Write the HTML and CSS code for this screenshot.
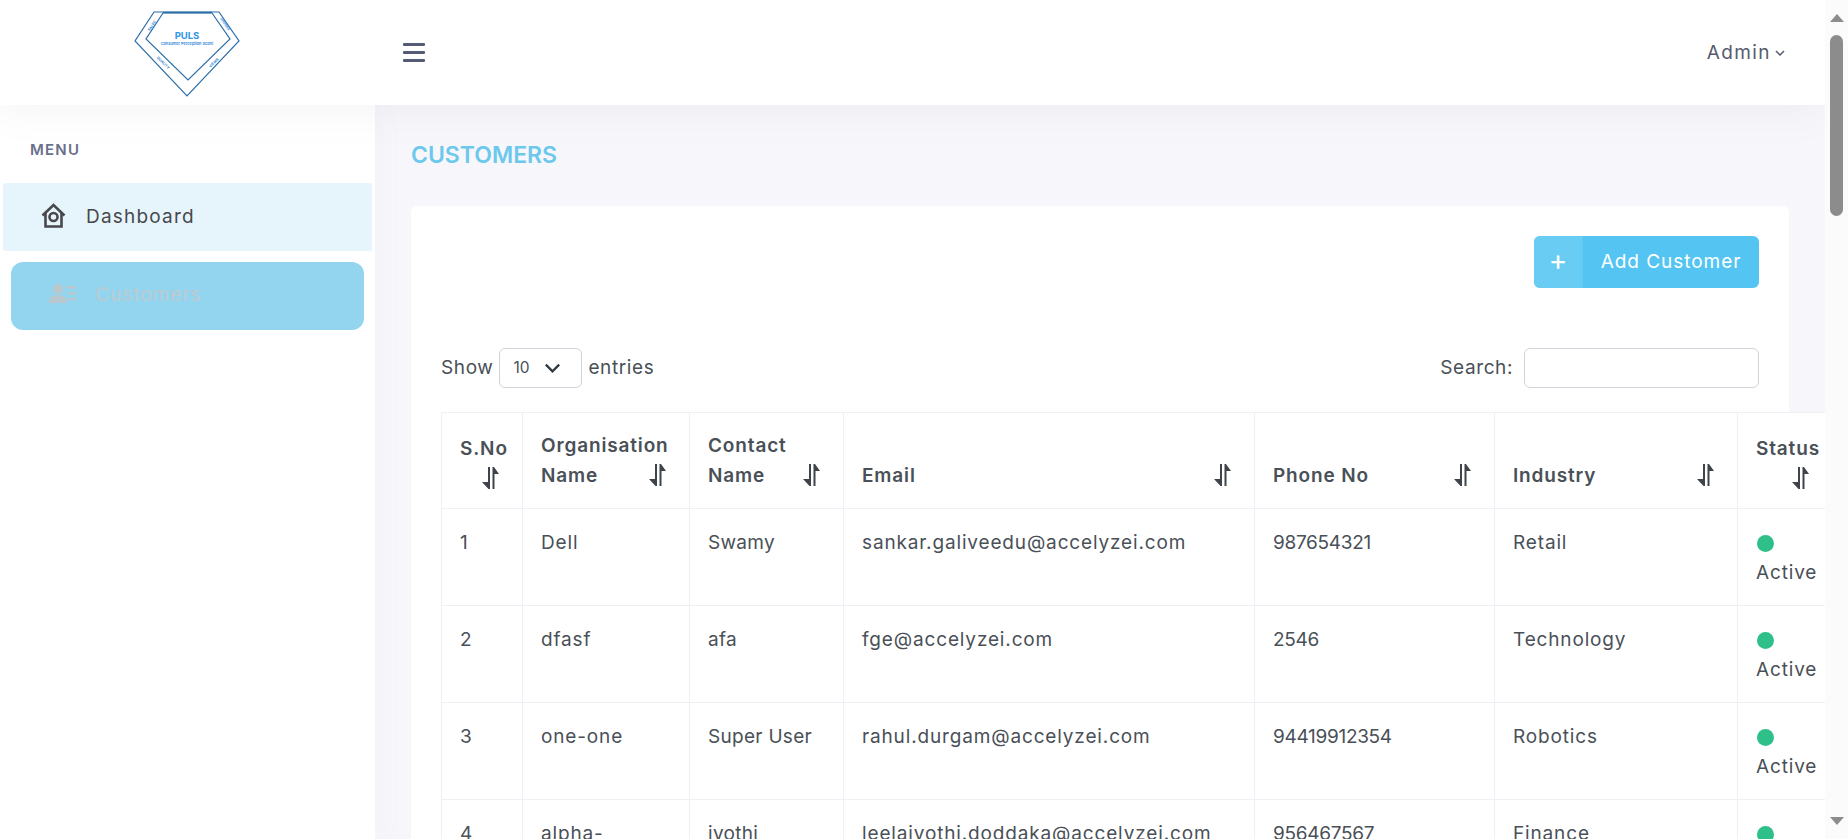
FILE: index.html
```html
<!DOCTYPE html>
<html lang="en">
<head>
<meta charset="utf-8">
<title>Customers</title>
<link rel="stylesheet" href="styles.css">
</head>
<body>
<svg class="defs" aria-hidden="true"><symbol id="sort" viewBox="0 0 17 22"><path d="M6 0h2v22H6.500L0 15h6zM10.500 0H12l5 7h-4.500v15h-2z"/></symbol></svg>
<div class="app">
  <div class="page">
    <header class="topbar">
      <div class="brand">
        <svg class="logo" viewBox="0 0 114 100">
          <g fill="none" stroke="#2c6ea8" stroke-width="1.2">
            <path d="M24 9H89L109 38 57 93 5 38Z"/>
            <path d="M33 10H82L100 36 58 77 16 36Z"/>
          </g>
          <path d="M33 9.500H82" stroke="#2c6ea8" stroke-width="1.500"/>
          <text x="57" y="36" class="logo-title">PULS</text>
          <text x="57" y="41.500" class="logo-sub">Consumer Perception Score</text>
          <text class="logo-side" transform="translate(22 23) rotate(-56)">SALES</text>
          <text class="logo-side" transform="translate(95 21) rotate(56)">ORDERS</text>
          <text class="logo-side" transform="translate(33 60) rotate(45)">QUALITY</text>
          <text class="logo-side" transform="translate(84 60) rotate(-45)">VIEWS</text>
        </svg>
      </div>
      <button class="burger" aria-label="Menu"><span></span><span></span><span></span></button>
      <div class="user">Admin
        <svg class="user-chevron" viewBox="0 0 10 6"><path d="M1 1l4 4 4-4" fill="none" stroke="#555b6e" stroke-width="1.500"/></svg>
      </div>
    </header>
    <div class="body">
      <aside class="sidebar">
        <div class="menu-label">MENU</div>
        <a class="nav nav-dash">
          <svg class="nav-home" viewBox="0 0 26 26"><g fill="none" stroke="#48484d" stroke-width="2.600"><path d="M1.500 12.500 12.500 2l11 10.500"/><path d="M4.500 10v13.500h16V10"/><circle cx="12.500" cy="14" r="4"/></g></svg>
          <span class="nav-text">Dashboard</span>
        </a>
        <a class="nav nav-cust">
          <svg class="nav-users" viewBox="0 0 27 19"><g fill="#b9c7cf"><circle cx="9" cy="5" r="5"/><path d="M0 19c0-6 4-8 9-8s9 2 9 8zM17 2h10v2.500H17zM19 8h8v2.500h-8zM19 14h8v2.500h-8z"/></g></svg>
          <span class="nav-text">Customers</span>
        </a>
      </aside>
      <main class="main">
        <h1 class="title">CUSTOMERS</h1>
        <section class="card">
          <div class="actions">
            <button class="add"><span class="add-plus">+</span><span class="add-text">Add Customer</span></button>
          </div>
          <div class="controls">
            <div class="length">Show
              <span class="select">10<svg class="select-chevron" viewBox="0 0 20 12"><path d="M2 2l8 8 8-8" fill="none" stroke="#343a40" stroke-width="2.800"/></svg></span>
              entries</div>
            <div class="search">Search: <span class="search-box"></span></div>
          </div>
          <table class="grid">
            <colgroup><col class="c1"><col class="c2"><col class="c3"><col class="c4"><col class="c5"><col class="c6"><col class="c7"></colgroup>
            <thead>
              <tr>
                <th><div class="th th-stack">S.No<svg class="sort"><use href="#sort"/></svg></div></th>
                <th><div class="th"><span>Organisation<br>Name</span><svg class="sort"><use href="#sort"/></svg></div></th>
                <th><div class="th"><span>Contact<br>Name</span><svg class="sort"><use href="#sort"/></svg></div></th>
                <th><div class="th"><span>Email</span><svg class="sort"><use href="#sort"/></svg></div></th>
                <th><div class="th"><span>Phone No</span><svg class="sort"><use href="#sort"/></svg></div></th>
                <th><div class="th"><span>Industry</span><svg class="sort"><use href="#sort"/></svg></div></th>
                <th><div class="th th-stack">Status<svg class="sort"><use href="#sort"/></svg></div></th>
              </tr>
            </thead>
            <tbody>
              <tr><td>1</td><td>Dell</td><td>Swamy</td><td>sankar.galiveedu@accelyzei.com</td><td>987654321</td><td>Retail</td><td><i class="dot"></i><br>Active</td></tr>
              <tr><td>2</td><td>dfasf</td><td>afa</td><td>fge@accelyzei.com</td><td>2546</td><td>Technology</td><td><i class="dot"></i><br>Active</td></tr>
              <tr><td>3</td><td>one-one</td><td>Super User</td><td>rahul.durgam@accelyzei.com</td><td>94419912354</td><td>Robotics</td><td><i class="dot"></i><br>Active</td></tr>
              <tr><td>4</td><td>alpha-</td><td>jyothi</td><td>leelajyothi.doddaka@accelyzei.com</td><td>956467567</td><td>Finance</td><td><i class="dot"></i><br>Active</td></tr>
            </tbody>
          </table>
        </section>
      </main>
    </div>
  </div>
  <div class="scrollbar">
    <i class="arrow arrow-up"></i>
    <i class="thumb"></i>
    <i class="arrow arrow-down"></i>
  </div>
</div>
</body>
</html>
```
FILE: styles.css
```css
* { box-sizing: border-box; }
html, body { margin: 0; height: 100%; overflow: hidden; }
body { font-family: Inter, "Noto Sans", sans-serif; font-size: 19px; letter-spacing: .85px; color: #495057; background: #fff; }
.defs { display: none; }
.app { display: flex; height: 839px; }
.page { flex: 1; min-width: 0; display: flex; flex-direction: column; }

.topbar { height: 105px; flex: none; display: flex; align-items: center; background: #fff; position: relative; z-index: 2; box-shadow: 0 2px 40px rgba(120,125,150,.10); }
.brand { width: 375px; flex: none; display: flex; justify-content: center; padding-right: 2px; letter-spacing: 0; }
.logo { width: 114px; height: 100px; display: block; }
.logo-title { font-size: 9.500px; font-weight: 700; fill: #2f95e8; text-anchor: middle; }
.logo-sub { font-size: 3.900px; font-weight: 600; fill: #2f85d8; text-anchor: middle; }
.logo-side { font-size: 3.600px; font-weight: 700; fill: #2f85d8; text-anchor: middle; dominant-baseline: central; }
.burger { margin-left: 28px; padding: 0; width: 22px; height: 19px; border: 0; background: none; display: flex; flex-direction: column; justify-content: space-between; }
.burger span { display: block; height: 3px; background: #555b73; border-radius: 1px; }
.user { margin-left: auto; padding-right: 40px; color: #555b6e; display: flex; align-items: center; gap: 4px; letter-spacing: 1.400px; }
.user-chevron { width: 10px; height: 6px; }

.body { flex: 1; min-height: 0; display: flex; }
.sidebar { width: 375px; flex: none; background: #fff; box-shadow: 0 0 30px rgba(120,125,150,.06); position: relative; z-index: 1; }
.menu-label { margin: 35px 0 0 30px; height: 20px; line-height: 20px; font-size: 15px; font-weight: 600; letter-spacing: 1.200px; color: #6a6f8c; }
.nav { display: flex; align-items: center; height: 68px; }
.nav-text { letter-spacing: 1.200px; }
.nav-dash { margin: 23px 3px 0; padding-left: 38px; background: #e6f5fb; border-radius: 3px; color: #48484d; }
.nav-dash .nav-text { margin-bottom: 2px; }
.nav-home { width: 26px; height: 26px; margin: 0 19px 2px 0; }
.nav-cust { margin: 11px 11px 0; padding-left: 38px; background: #93d5ee; border-radius: 12px; color: #bdcad2; }
.nav-cust .nav-text { margin-bottom: 4px; letter-spacing: 1px; }
.nav-users { width: 27px; height: 19px; margin: 0 19px 5px 0; }

.main { flex: 1; min-width: 0; overflow: hidden; background: #f7f7fb; padding: 35px 36px 0; }
.title { margin: 0; height: 30px; line-height: 30px; font-size: 23px; font-weight: 600; letter-spacing: 0; color: #6cc8ec; }
.card { margin-top: 36px; width: 1378px; background: #fff; border-radius: 6px; padding: 30px 30px 0; height: 900px; }
.actions { display: flex; justify-content: flex-end; }
.add { display: flex; height: 52px; width: 225px; padding: 0; border: 0; border-radius: 6px; overflow: hidden; background: #54c5f3; color: #fff; font: inherit; letter-spacing: .95px; }
.add-plus { width: 48px; height: 100%; display: flex; align-items: center; justify-content: center; padding-bottom: 4px; background: #69cdf3; font-size: 28px; letter-spacing: 0; }
.add-text { flex: 1; height: 100%; display: flex; align-items: center; justify-content: center; padding-bottom: 2px; border-left: 1px solid #62c9f3; }
.controls { margin-top: 60px; height: 40px; display: flex; justify-content: space-between; align-items: center; letter-spacing: .6px; }
.length, .search { display: flex; align-items: center; gap: 6px; padding-bottom: 1px; }
.select { width: 83px; height: 40px; border: 1px solid #ced4da; border-radius: 6px; display: flex; align-items: center; padding-left: 13px; gap: 14px; font-size: 15.500px; letter-spacing: 0; }
.select-chevron { width: 17px; height: 10px; }
.search-box { width: 235px; height: 40px; border: 1px solid #ced4da; border-radius: 6px; margin-left: 5px; display: block; }

.grid { margin-top: 24px; table-layout: fixed; border-collapse: collapse; width: 1466px; background: #fff; }
.c1 { width: 81px; } .c2 { width: 167px; } .c3 { width: 154px; } .c4 { width: 411px; }
.c5 { width: 240px; } .c6 { width: 243px; } .c7 { width: 170px; }
.grid th, .grid td { border: 1px solid #eff0f6; text-align: left; line-height: 30px; }
.grid th { height: 96px; padding: 10px 18px 17px; vertical-align: bottom; font-weight: 600; color: #495057; letter-spacing: .85px; }
.grid td { height: 96.500px; padding: 19px 18px 17px; vertical-align: top; font-weight: 400; }
.grid td:nth-child(3) { letter-spacing: .3px; }
.grid td:nth-child(5) { letter-spacing: -.3px; }
.th { display: flex; align-items: flex-end; }
.th span { flex: 1 1 0; min-width: 0; white-space: nowrap; }
.th-stack { flex-direction: column; align-items: flex-start; width: 100%; margin-bottom: 2px; }
.sort { width: 17px; height: 22px; flex: none; margin: 0 5px 5px 0; fill: #3f444b; }
.th-stack .sort { align-self: flex-end; margin: 3px 5px 0 0; }
.grid th:last-child .th { width: 58px; }
.dot { display: inline-block; width: 17px; height: 17px; margin-left: 1px; border-radius: 50%; background: #2fc08a; vertical-align: -3px; }

.scrollbar { width: 23px; flex: none; background: #fbfbfb; display: flex; flex-direction: column; align-items: center; position: relative; z-index: 3; }
.arrow { width: 0; height: 0; border-left: 7.500px solid transparent; border-right: 7.500px solid transparent; }
.arrow-up { margin-top: 14px; border-bottom: 8px solid #8c8c8c; }
.thumb { width: 13px; height: 181px; margin-top: 13px; background: #8c8c8c; border-radius: 7px; }
.arrow-down { margin-top: auto; margin-bottom: 14px; border-top: 8px solid #8c8c8c; }
```
